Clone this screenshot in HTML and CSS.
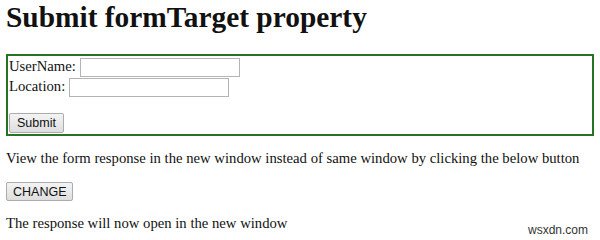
FILE: index.html
```html
<!DOCTYPE html>
<html>
<head>
<meta charset="utf-8">
<link rel="stylesheet" href="styles.css">
</head>
<body>
<h1 class="title">Submit formTarget property</h1>
<form class="box">
  <div class="row">UserName: <input class="field" type="text"></div>
  <div class="row">Location: <input class="field" type="text"></div>
  <div class="spacer"></div>
  <div class="row"><button class="btn" type="button">Submit</button></div>
</form>
<p class="note">View the form response in the new window instead of same window by clicking the below button</p>
<button class="btn change" type="button">CHANGE</button>
<p class="result">The response will now open in the new window</p>
<div class="mark">wsxdn.com</div>
</body>
</html>
```
FILE: styles.css
```css
html, body {
  margin: 0;
  padding: 0;
  background: #fff;
}
body {
  padding: 0 6px;
  font-family: "Liberation Serif", "Times New Roman", serif;
  font-size: 14.7px;
  color: #111;
  position: relative;
  height: 240px;
  box-sizing: border-box;
  overflow: hidden;
}
.title {
  margin: 0 0 20px 0;
  font-size: 29.4px;
  line-height: 34px;
  font-weight: bold;
  color: #111;
}
.box {
  border: 2px solid #267326;
  margin: 0;
  padding: 1px;
  display: flex;
  flex-direction: column;
}
.row {
  height: 20px;
  line-height: 19px;
  display: flex;
  align-items: flex-start;
  white-space: pre;
}
.field {
  box-sizing: border-box;
  width: 160px;
  height: 19px;
  margin: 1px 0 0 0;
  padding: 0;
  border: 1px solid #b4b4b4;
  background: #fff;
}
.spacer {
  height: 16px;
}
.btn {
  box-sizing: border-box;
  height: 20px;
  padding: 0 7px;
  margin: 0;
  font-family: "Liberation Sans", Arial, sans-serif;
  font-size: 12.5px;
  color: #111;
  border: 1px solid #acacac;
  border-radius: 2px;
  background: linear-gradient(#f4f4f4, #dedede);
}
.note {
  margin: 14px 0 15px 0;
  line-height: 17px;
}
.change {
  display: block;
  height: 19px;
  padding: 0 6px;
}
.result {
  margin: 14px 0 0 0;
  line-height: 17px;
}
.mark {
  position: absolute;
  right: 12px;
  top: 223px;
  font-family: "Liberation Sans", Arial, sans-serif;
  font-size: 12px;
  color: #333;
}
```
